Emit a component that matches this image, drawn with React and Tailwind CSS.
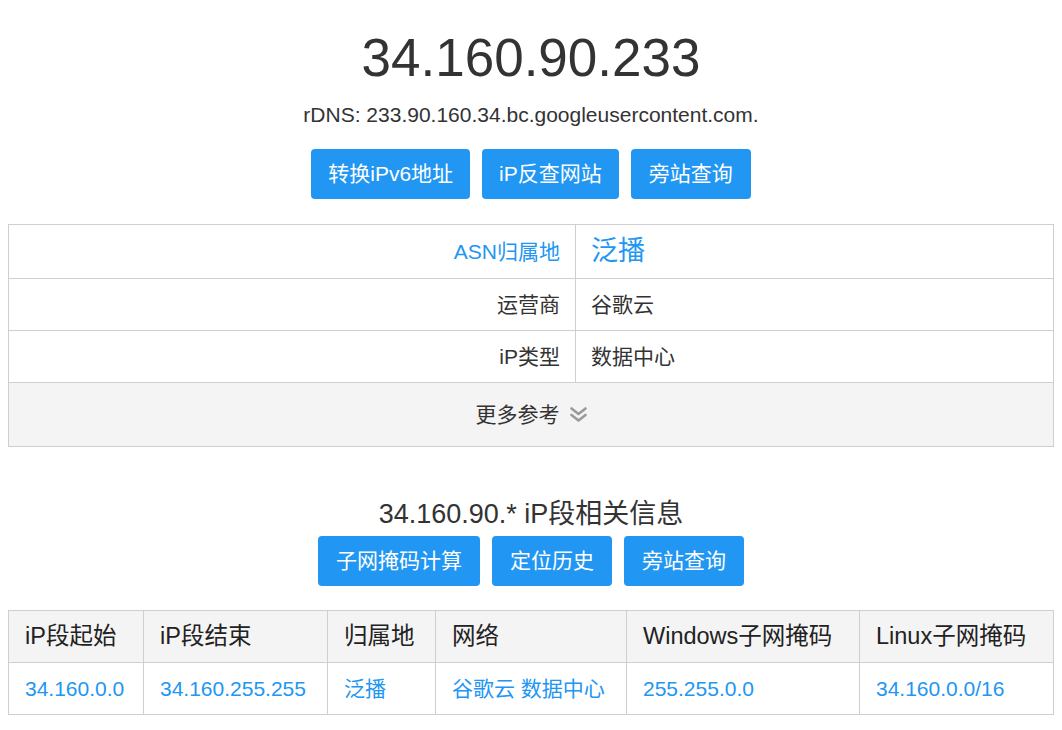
const btn =
  'h-[50px] flex items-center rounded-[4px] bg-[#2196f3] text-white text-[21px] leading-[30px] hover:bg-[#1e88e5]';

const info = [
  { label: 'ASN归属地', value: '泛播', blue: true },
  { label: '运营商', value: '谷歌云' },
  { label: 'iP类型', value: '数据中心' },
];

const cols = ['iP段起始', 'iP段结束', '归属地', '网络', 'Windows子网掩码', 'Linux子网掩码'];
const row = ['34.160.0.0', '34.160.255.255', '泛播', '谷歌云 数据中心', '255.255.0.0', '34.160.0.0/16'];

function DoubleChevron() {
  return (
    <svg width="17" height="15" viewBox="0 0 17 15" fill="none" stroke="#9a9a9a" strokeWidth="2.6" strokeLinecap="round" strokeLinejoin="round">
      <path d="M1.5 1.5l7 5.5 7-5.5" />
      <path d="M1.5 8l7 5.5 7-5.5" />
    </svg>
  );
}

export default function App() {
  return (
    <div className="min-h-[730px] bg-white px-2 text-[#333] font-['Liberation_Sans','Noto_Sans_CJK_SC',sans-serif]">
      {/* IP header */}
      <div className="flex flex-col items-center pt-[29px]">
        <h1 className="text-[53px] leading-[58px] font-normal">34.160.90.233</h1>
        <p className="mt-[13px] text-[21px] leading-[30px]">rDNS: 233.90.160.34.bc.googleusercontent.com.</p>
        <div className="mt-[19px] flex gap-3">
          <button className={`${btn} px-[17px]`}>转换iPv6地址</button>
          <button className={`${btn} px-[17px]`}>iP反查网站</button>
          <button className={`${btn} px-[18px]`}>旁站查询</button>
        </div>
      </div>

      {/* Info table */}
      <div className="mt-[25px] border border-[#cfcfcf]">
        {info.map((r, i) => (
          <div key={i} className={`grid grid-cols-[567px_1fr] border-b border-[#cfcfcf] ${i === 0 ? 'h-[54px]' : 'h-[52px]'}`}>
            <div className={`flex items-center justify-end pr-[15px] border-r border-[#cfcfcf] text-[21px] ${r.blue ? 'text-[#2196f3]' : ''}`}>
              {r.label}
            </div>
            <div className={`flex items-center pl-[15px] ${r.blue ? 'text-[27px] text-[#2196f3]' : 'text-[21px]'}`}>
              {r.value}
            </div>
          </div>
        ))}
        <div className="h-[63px] bg-[#f4f4f4] flex items-center justify-center gap-[10px] text-[21px]">
          <span>更多参考</span>
          <DoubleChevron />
        </div>
      </div>

      {/* Segment info */}
      <div className="mt-[49px] flex flex-col items-center">
        <h2 className="text-[27px] leading-[36px] font-normal">34.160.90.* iP段相关信息</h2>
        <div className="mt-[4px] flex gap-3">
          <button className={`${btn} px-[18px]`}>子网掩码计算</button>
          <button className={`${btn} px-[18px]`}>定位历史</button>
          <button className={`${btn} px-[18px]`}>旁站查询</button>
        </div>
      </div>

      <div className="mt-[24px] grid grid-cols-[135px_184px_108px_191px_233px_1fr] border-l border-t border-[#cfcfcf]">
        {cols.map((c) => (
          <div key={c} className="h-[52px] flex items-center pl-4 bg-[#f4f4f4] border-r border-b border-[#cfcfcf] text-[23.5px] text-[#222]">
            {c}
          </div>
        ))}
        {row.map((c, i) => (
          <div key={i} className="h-[52px] flex items-center pl-4 border-r border-b border-[#cfcfcf] text-[21px] text-[#2196f3]">
            {c}
          </div>
        ))}
      </div>
    </div>
  );
}
